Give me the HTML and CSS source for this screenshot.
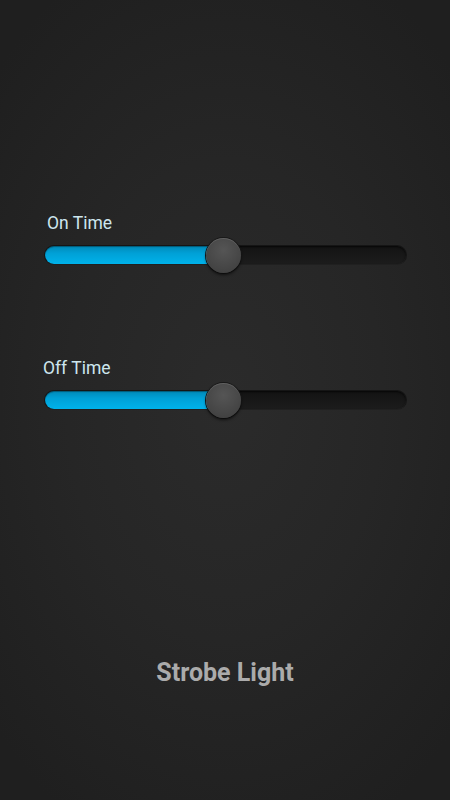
FILE: index.html
```html
<!DOCTYPE html>
<html>
<head>
<meta charset="utf-8">
<link rel="stylesheet" href="styles.css">
</head>
<body>
<main class="page">
  <section class="controls">
    <div class="control control-on">
      <div class="label">On Time</div>
      <div class="track">
        <div class="fill" style="width: 49.5%"></div>
        <div class="thumb" style="left: 49.5%"></div>
      </div>
    </div>
    <div class="control control-off">
      <div class="label label-off">Off Time</div>
      <div class="track">
        <div class="fill" style="width: 49.5%"></div>
        <div class="thumb" style="left: 49.5%"></div>
      </div>
    </div>
  </section>
  <h1 class="title">Strobe Light</h1>
</main>
</body>
</html>
```
FILE: styles.css
```css
html, body {
  margin: 0;
  padding: 0;
}
body {
  width: 450px;
  height: 800px;
  overflow: hidden;
  background: radial-gradient(ellipse 70% 60% at 50% 50%, #2b2b2b 0%, #262626 50%, #1f1f1f 100%);
  font-family: Roboto, "Noto Sans", sans-serif;
}
.page {
  height: 800px;
  display: flex;
  flex-direction: column;
}
.controls {
  padding: 211px 44px 0 45px;
  display: flex;
  flex-direction: column;
  gap: 92px;
}
.control {
  display: flex;
  flex-direction: column;
  gap: 11px;
}
.label {
  color: #cde6ee;
  font-size: 17.5px;
  line-height: 24px;
  padding-left: 2px;
}
.label-off {
  padding-left: 0;
  margin-left: -2px;
}
.track {
  position: relative;
  height: 18px;
  border-radius: 9px;
  background: linear-gradient(#131313, #1c1c1c);
  box-shadow: inset 0 1px 2px rgba(0,0,0,0.7), 0 1px 0 rgba(255,255,255,0.05), 0 0 0 1px #151515;
}
.fill {
  height: 100%;
  border-radius: 9px 0 0 9px;
  background: linear-gradient(#0089b8 0%, #00a0d6 40%, #00b2ea 100%);
  box-shadow: inset 0 1px 1px rgba(0,0,0,0.35);
}
.thumb {
  position: absolute;
  top: 50%;
  width: 35px;
  height: 35px;
  margin-left: -17.5px;
  margin-top: -17.5px;
  border-radius: 50%;
  background: radial-gradient(circle at 50% 35%, #555 0%, #4a4a4a 45%, #3c3c3c 100%);
  box-shadow: 0 2px 3px rgba(0,0,0,0.6), inset 0 1px 0 rgba(255,255,255,0.12), 0 0 0 1px #1a1a1a;
}
.title {
  margin: auto 0 0 0;
  padding-bottom: 112px;
  text-align: center;
  color: #ababab;
  font-size: 25px;
  font-weight: 700;
  line-height: 30px;
}
```
